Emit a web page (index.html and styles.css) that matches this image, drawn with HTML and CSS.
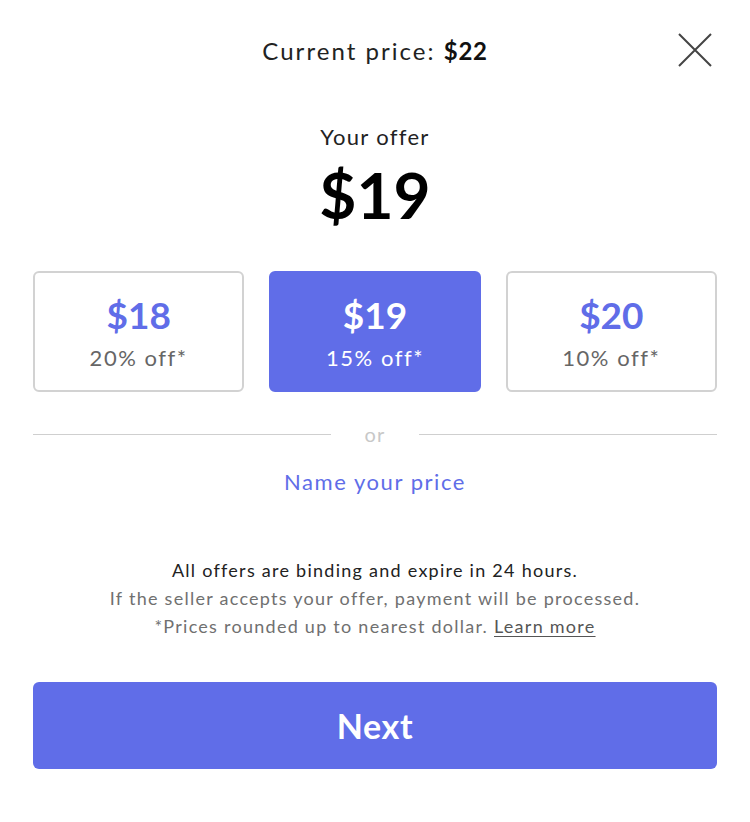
FILE: index.html
```html
<!DOCTYPE html>
<html>
<head>
<meta charset="utf-8">
<link rel="stylesheet" href="styles.css">
</head>
<body>
<div class="modal">
  <header class="header">
    <div class="current">Current price: <b>$22</b></div>
    <button class="close" aria-label="Close">
      <svg width="34" height="34" viewBox="0 0 34 34"><path d="M1 1 L33 33 M33 1 L1 33" stroke="#444" stroke-width="2" fill="none"/></svg>
    </button>
  </header>
  <section class="offer">
    <div class="offer-label">Your offer</div>
    <div class="offer-amount">$19</div>
  </section>
  <div class="options">
    <div class="option">
      <div class="opt-price">$18</div>
      <div class="opt-off">20% off*</div>
    </div>
    <div class="option selected">
      <div class="opt-price">$19</div>
      <div class="opt-off">15% off*</div>
    </div>
    <div class="option">
      <div class="opt-price">$20</div>
      <div class="opt-off">10% off*</div>
    </div>
  </div>
  <div class="divider"><span class="line"></span><span class="or">or</span><span class="line"></span></div>
  <div class="name-price">Name your price</div>
  <div class="notes">
    <div class="note-main">All offers are binding and expire in 24 hours.</div>
    <div class="note">If the seller accepts your offer, payment will be processed.</div>
    <div class="note">*Prices rounded up to nearest dollar. <a class="learn">Learn more</a></div>
  </div>
  <button class="next">Next</button>
</div>
</body>
</html>
```
FILE: styles.css
```css
html, body {
  margin: 0;
  padding: 0;
  background: #fff;
}
body {
  font-family: "Lato", "Noto Sans", sans-serif;
  color: #222;
}
.modal {
  width: 750px;
  box-sizing: border-box;
  padding: 0 33px;
}
.header {
  height: 100px;
  display: flex;
  align-items: center;
  justify-content: center;
  position: relative;
}
.current {
  font-size: 24px;
  letter-spacing: 0.085em;
  color: #222;
}
.current b {
  font-weight: 700;
  color: #111;
  letter-spacing: 0.03em;
}
.close {
  position: absolute;
  right: 5px;
  top: 33px;
  border: 0;
  background: none;
  padding: 0;
  width: 34px;
  height: 34px;
}
.offer {
  text-align: center;
}
.offer-label {
  font-size: 22px;
  line-height: 30px;
  letter-spacing: 0.06em;
  color: #222;
  margin-top: 22px;
}
.offer-amount {
  font-size: 64px;
  font-weight: 700;
  line-height: 66px;
  color: #000;
  margin-top: 10px;
}
.options {
  display: grid;
  grid-template-columns: repeat(3, 1fr);
  gap: 25px;
  margin-top: 43px;
}
.option {
  height: 121px;
  box-sizing: border-box;
  border: 2px solid #d2d2d2;
  border-radius: 6px;
  display: flex;
  flex-direction: column;
  align-items: center;
  justify-content: center;
}
.option.selected {
  background: #606de8;
  border-color: #606de8;
}
.opt-price {
  font-size: 37px;
  font-weight: 700;
  color: #606de8;
  line-height: 44px;
  margin-top: 2px;
}
.opt-off {
  font-size: 22px;
  letter-spacing: 0.07em;
  color: #666;
  line-height: 30px;
  margin-top: 6px;
}
.selected .opt-price, .selected .opt-off {
  color: #fff;
}
.divider {
  display: flex;
  align-items: center;
  margin-top: 30px;
  height: 24px;
}
.line {
  flex: 1;
  height: 1px;
  background: #cfcfcf;
}
.or {
  width: 88px;
  text-align: center;
  font-size: 20px;
  letter-spacing: 0.06em;
  color: #c8c8c8;
}
.name-price {
  text-align: center;
  color: #606de8;
  font-size: 22px;
  letter-spacing: 0.07em;
  line-height: 30px;
  margin-top: 21px;
}
.notes {
  text-align: center;
  margin-top: 59px;
  font-size: 18px;
  letter-spacing: 0.07em;
  line-height: 28px;
}
.note-main {
  color: #222;
}
.note {
  color: #707070;
}
.learn {
  color: #555;
  text-decoration: underline;
  text-underline-offset: 3px;
}
.next {
  display: block;
  width: 100%;
  height: 87px;
  margin-top: 42px;
  background: #606de8;
  border: 0;
  border-radius: 6px;
  color: #fff;
  font-family: "Lato", sans-serif;
  font-weight: 700;
  font-size: 34px;
  letter-spacing: 0.02em;
}
```
